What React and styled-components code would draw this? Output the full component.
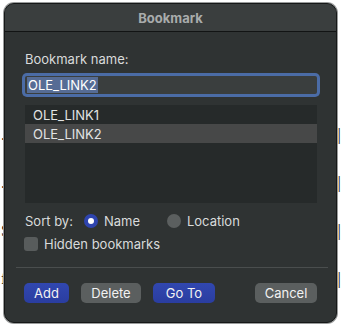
import React from 'react'
import styled, { createGlobalStyle } from 'styled-components'

const GlobalStyle = createGlobalStyle`
    html, body {
        margin: 0;
        padding: 0;
        background: #ffffff;
    }
    body {
        width: 341px;
        height: 327px;
        overflow: hidden;
    }
`

const Page = styled.div`
    position: relative;
    width: 341px;
    height: 327px;
    background: #ffffff;
    overflow: hidden;
`

const Doc = styled.div`
    display: flex;
    flex-direction: column;
    padding-top: 126px;
    font-family: 'Liberation Serif', serif;
    font-size: 17px;
    color: #111;
`

const DocLine = styled.div`
    height: 48px;
    display: flex;
    justify-content: space-between;
    align-items: flex-start;
    line-height: 18px;
    padding: 0 0 0 1px;
`

const Dialog = styled.div`
    position: absolute;
    left: 4px;
    top: 3px;
    width: 333px;
    height: 320px;
    box-sizing: border-box;
    border-radius: 10px;
    background: #2f3333;
    border: 1px solid #161818;
    box-shadow: 0 0 0 1px #9a9c9c;
    display: flex;
    flex-direction: column;
    overflow: hidden;
    font-family: Inter, 'Liberation Sans', sans-serif;
    color: #d9dbdb;
`

const TitleBar = styled.div`
    height: 27px;
    display: flex;
    align-items: center;
    justify-content: center;
    background: #3a3e3e;
    border-bottom: 1px solid #121414;
    font-size: 13px;
    font-weight: 700;
    color: #a9acac;
`

const Body = styled.div`
    display: flex;
    flex-direction: column;
    padding: 0 19px 0 20px;
`

const Label = styled.div`
    margin-top: 19px;
    font-size: 13px;
    line-height: 16px;
`

const NameInput = styled.div`
    margin-top: 9px;
    height: 18px;
    background: #3a3e3e;
    box-shadow: 0 0 0 3px #4b6ca6;
    border-radius: 2px;
    display: flex;
    align-items: center;
    padding-left: 2px;
    font-size: 13px;
    color: #ffffff;
`

const Selected = styled.span`
    background: #566c95;
    padding: 0 1px;
    line-height: 16px;
`

const List = styled.div`
    margin-top: 11px;
    height: 98px;
    background: #262a2a;
    display: flex;
    flex-direction: column;
`

const Row = styled.div`
    height: 19px;
    display: flex;
    align-items: center;
    padding-left: 8px;
    font-size: 13px;
    color: #e2e4e4;
    background: ${(props) => (props.active ? '#474848' : 'transparent')};
`

const OptionRow = styled.div`
    display: flex;
    align-items: center;
    height: 16px;
    margin-top: ${(props) => props.gap}px;
    font-size: 13px;
`

const Radio = styled.span`
    width: 14px;
    height: 14px;
    border-radius: 50%;
    box-sizing: border-box;
    margin: 0 6px 0 ${(props) => props.left}px;
    background: ${(props) => (props.checked ? '#2e44ae' : '#5b5f5f')};
    display: flex;
    align-items: center;
    justify-content: center;
    &::after {
        content: '';
        width: 6px;
        height: 6px;
        border-radius: 50%;
        background: #ffffff;
        display: ${(props) => (props.checked ? 'block' : 'none')};
    }
`

const Checkbox = styled.span`
    width: 14px;
    height: 14px;
    border-radius: 3px;
    background: #585c5c;
    margin: 0 6px 0 -1px;
`

const Separator = styled.div`
    margin: 15px -11px 0 -9px;
    height: 1px;
    background: #4a4e4e;
`

const Buttons = styled.div`
    display: flex;
    align-items: center;
    gap: 12px;
    margin: 15px 0 0 -1px;
`

const Button = styled.button`
    height: 20px;
    width: ${(props) => props.w}px;
    margin-left: ${(props) => (props.push ? 'auto' : '0')};
    border: none;
    border-radius: 5px;
    padding: 0;
    font-family: Inter, 'Liberation Sans', sans-serif;
    font-size: 13px;
    color: #f2f2f2;
    background: ${(props) =>
        props.primary
            ? 'linear-gradient(#3147b0, #2a3da0)'
            : '#5b5f5f'};
`

const docEdges = [
    ['.', '|'],
    ['.', '|'],
    ['S', '|'],
    ['f', '|'],
]

export default function App() {
    return (
        <Page>
            <GlobalStyle />
            <Doc>
                {docEdges.map(([left, right], i) => (
                    <DocLine key={i}>
                        <span>{left}</span>
                        <span>{right}</span>
                    </DocLine>
                ))}
            </Doc>
            <Dialog>
                <TitleBar>Bookmark</TitleBar>
                <Body>
                    <Label>Bookmark name:</Label>
                    <NameInput>
                        <Selected>OLE_LINK2</Selected>
                    </NameInput>
                    <List>
                        <Row>OLE_LINK1</Row>
                        <Row active>OLE_LINK2</Row>
                    </List>
                    <OptionRow gap={10}>
                        Sort by:
                        <Radio checked left={11} />
                        Name
                        <Radio left={27} />
                        Location
                    </OptionRow>
                    <OptionRow gap={7}>
                        <Checkbox />
                        Hidden bookmarks
                    </OptionRow>
                    <Separator />
                    <Buttons>
                        <Button primary w={45}>
                            Add
                        </Button>
                        <Button w={60}>Delete</Button>
                        <Button primary w={62}>
                            Go To
                        </Button>
                        <Button push w={62}>
                            Cancel
                        </Button>
                    </Buttons>
                </Body>
            </Dialog>
        </Page>
    )
}
